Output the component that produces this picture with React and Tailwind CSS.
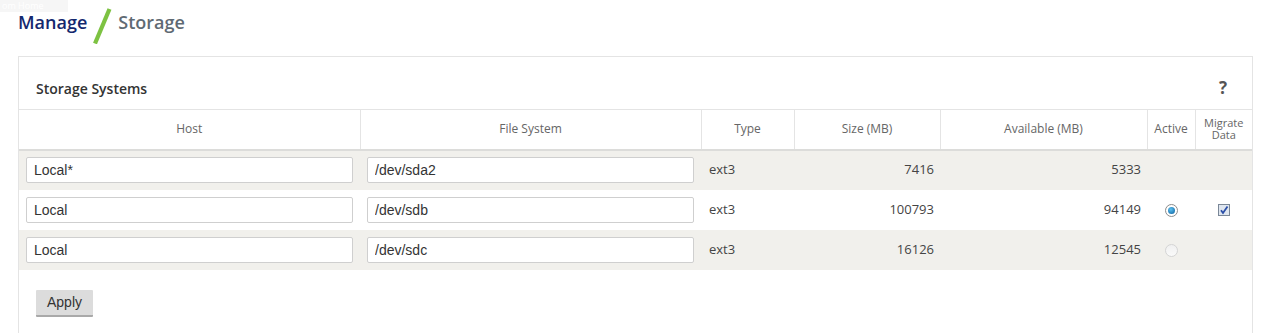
import React from "react";

const rows = [
  { host: "Local*", fs: "/dev/sda2", type: "ext3", size: "7416", avail: "5333", active: null, migrate: false },
  { host: "Local", fs: "/dev/sdb", type: "ext3", size: "100793", avail: "94149", active: true, migrate: true },
  { host: "Local", fs: "/dev/sdc", type: "ext3", size: "16126", avail: "12545", active: false, migrate: false },
];

const Radio = ({ checked }) =>
  checked ? (
    <span className="inline-flex h-[13px] w-[13px] items-center justify-center rounded-full border border-[#8c8c8c] bg-white">
      <span className="h-[7px] w-[7px] rounded-full bg-[radial-gradient(circle_at_40%_35%,#5bc0f0,#0a5e9c)]" />
    </span>
  ) : (
    <span className="inline-block h-[13px] w-[13px] rounded-full border border-[#d4d4d4] bg-[linear-gradient(#f0f0f0,#fafafa)]" />
  );

const Checkbox = () => (
  <span className="inline-flex h-[12px] w-[12px] items-center justify-center border border-[#7a8797] bg-[#dfe6ef]">
    <svg width="10" height="10" viewBox="0 0 10 10">
      <path d="M2 5.2 L4 8 L8.5 1.5" fill="none" stroke="#2b4fa8" strokeWidth="1.8" />
    </svg>
  </span>
);

const App = () => {
  return (
    <div className="relative min-h-[333px] bg-white font-['Open_Sans',sans-serif]">
      {/* faded tooltip remnant */}
      <div className="absolute left-0 top-0 h-[12px] w-[68px] bg-[#f6f6f6] pl-[2px] pt-[1px] text-[9px] leading-[9px] text-white">
        om Home
      </div>

      <div className="flex items-start px-[18px] pt-[11px]">
        <h1 className="text-[18px] font-semibold leading-[22px] text-[#14286e]">Manage</h1>
        <svg width="24" height="36" viewBox="0 0 24 36" className="-mt-[3px] ml-[4px] mr-[3px]">
          <path d="M4 35.5 L18.5 1" stroke="#7dc242" strokeWidth="4.2" />
        </svg>
        <span className="text-[18px] font-semibold leading-[22px] text-[#5f6a73]">Storage</span>
      </div>

      <div className="ml-[18px] mr-[11px] mt-[12px] border border-[#e4e4e4]">
        <div className="flex h-[52px] items-center justify-between pl-[17px] pr-[25px] pt-[10px]">
          <h2 className="text-[14px] font-semibold text-[#333]">Storage Systems</h2>
          <span className="text-[17px] font-bold text-[#555]">?</span>
        </div>

        <table className="w-full table-fixed border-collapse text-[13px] text-[#444]">
          <colgroup>
            <col className="w-[341px]" />
            <col className="w-[341px]" />
            <col className="w-[93px]" />
            <col className="w-[146px]" />
            <col className="w-[207px]" />
            <col className="w-[48px]" />
            <col />
          </colgroup>
          <thead>
            <tr className="h-[40px] border-y border-[#e4e4e4] border-b-[2px] border-b-[#dcdcda] text-[12px] font-normal text-[#666]">
              <th className="border-r border-[#e4e4e4] font-normal">Host</th>
              <th className="border-r border-[#e4e4e4] font-normal">File System</th>
              <th className="border-r border-[#e4e4e4] font-normal">Type</th>
              <th className="border-r border-[#e4e4e4] font-normal">Size (MB)</th>
              <th className="border-r border-[#e4e4e4] font-normal">Available (MB)</th>
              <th className="border-r border-[#e4e4e4] font-normal">Active</th>
              <th className="font-normal">
                <span className="block text-[11px] leading-[12px]">Migrate</span>
                <span className="block text-[11px] leading-[12px]">Data</span>
              </th>
            </tr>
          </thead>
          <tbody>
            {rows.map((r, i) => (
              <tr key={i} className={`h-[40px] ${i % 2 === 0 ? "bg-[#f1f0ec]" : "bg-white"}`}>
                <td className="px-[7px]">
                  <input
                    readOnly
                    value={r.host}
                    className="h-[26px] w-full rounded-[2px] border border-[#cfcfcf] bg-white px-[7px] font-['Liberation_Sans',sans-serif] text-[14px] text-[#333] outline-none"
                  />
                </td>
                <td className="px-[7px]">
                  <input
                    readOnly
                    value={r.fs}
                    className="h-[26px] w-full rounded-[2px] border border-[#cfcfcf] bg-white px-[7px] font-['Liberation_Sans',sans-serif] text-[14px] text-[#333] outline-none"
                  />
                </td>
                <td className="px-[8px]">{r.type}</td>
                <td className="px-[6px] text-right">{r.size}</td>
                <td className="px-[6px] text-right">{r.avail}</td>
                <td className="text-center">
                  {r.active !== null && (
                    <span className="inline-flex align-middle">
                      <Radio checked={r.active} />
                    </span>
                  )}
                </td>
                <td className="text-center">
                  {r.migrate && (
                    <span className="inline-flex align-middle">
                      <Checkbox />
                    </span>
                  )}
                </td>
              </tr>
            ))}
          </tbody>
        </table>

        <div className="px-[17px] pb-[20px] pt-[19px]">
          <button className="h-[27px] w-[57px] rounded-[1px] border-b-[2px] border-[#a9a9a9] bg-[#dcdcdc] font-['Liberation_Sans',sans-serif] text-[14px] text-[#333]">
            Apply
          </button>
        </div>
      </div>
    </div>
  );
};

export default App;
